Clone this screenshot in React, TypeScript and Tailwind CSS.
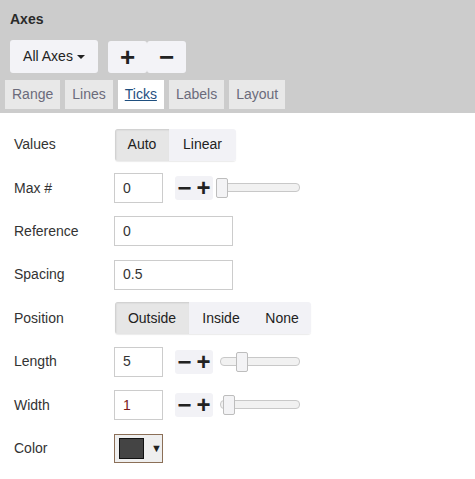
import React, { useState } from "react";

const tabs = ["Range", "Lines", "Ticks", "Labels", "Layout"];

const Stepper: React.FC = () => (
  <div className="flex h-[24px] ml-[12px]">
    <button className="w-[19px] h-full bg-[#f2f2f6] rounded-l-[3px] flex items-center justify-center text-[#222] text-[24px] font-bold leading-none">
      −
    </button>
    <button className="w-[19px] h-full bg-[#f2f2f6] rounded-r-[3px] flex items-center justify-center text-[#222] text-[24px] font-bold leading-none">
      +
    </button>
  </div>
);

const Slider: React.FC<{ pos: number }> = ({ pos }) => (
  <div className="relative w-[84px] h-[20px] ml-[3px]">
    <div className="absolute left-[4px] right-0 top-[5px] h-[9px] rounded-[4px] border border-[#c8c8c8] bg-[#f1f1f1]" />
    <div
      className="absolute top-0 w-[12px] h-[20px] border border-[#bdbdbd] bg-[#f3f3f5] rounded-[2px]"
      style={{ left: pos }}
    />
  </div>
);

const Row: React.FC<{ label: string; children: React.ReactNode }> = ({ label, children }) => (
  <div className="flex items-center h-[43.4px]">
    <div className="w-[100px] text-[14px] text-[#333]">{label}</div>
    <div className="flex items-center">{children}</div>
  </div>
);

const Seg: React.FC<{ items: { label: string; w: number }[]; active: string }> = ({ items, active }) => (
  <div className="flex h-[32px] rounded-[3px] overflow-hidden shadow-[0_1px_1px_rgba(0,0,0,0.08)] ml-[1px]">
    {items.map((it) => (
      <div
        key={it.label}
        style={{ width: it.w }}
        className={`flex items-center justify-center text-[14px] text-[#222] ${
          it.label === active ? "bg-[#e6e6e6] shadow-[inset_1px_1px_2px_rgba(0,0,0,0.12)]" : "bg-[#f2f2f6]"
        }`}
      >
        {it.label}
      </div>
    ))}
  </div>
);

const Input: React.FC<{ value: string; wide?: boolean; red?: boolean }> = ({ value, wide, red }) => (
  <div
    className={`h-[30px] border border-[#cccccc] bg-white flex items-center pl-[8px] text-[14px] ${
      wide ? "w-[119px]" : "w-[49px]"
    } ${red ? "text-[#7a1a1a]" : "text-[#333]"}`}
  >
    {value}
  </div>
);

const App: React.FC = () => {
  const [tab, setTab] = useState("Ticks");

  return (
    <div className="w-[475px] h-[479px] bg-white font-['Liberation_Sans',Arial,sans-serif]">
      <div className="bg-[#cccccc] h-[113px] px-[10px] pt-[10px]">
        <div className="text-[14px] font-bold text-[#2a2a2a] leading-[18px]">Axes</div>
        <div className="flex gap-[10px] mt-[12px]">
          <button className="w-[88px] h-[33px] bg-[#f3f3f7] rounded-[3px] text-[14px] text-[#222] flex items-center justify-center gap-[4px]">
            All Axes
            <span className="inline-block w-0 h-0 border-l-[4px] border-r-[4px] border-t-[4px] border-l-transparent border-r-transparent border-t-[#222]" />
          </button>
          <div className="flex h-[32px] mt-[1px]">
            <button className="w-[39px] h-full bg-[#f3f3f7] rounded-[3px] text-[26px] font-bold text-[#222] leading-none flex items-center justify-center">
              +
            </button>
            <button className="w-[39px] h-full bg-[#f3f3f7] rounded-[3px] text-[26px] font-bold text-[#222] leading-none flex items-center justify-center">
              −
            </button>
          </div>
        </div>
        <div className="flex gap-[5px] mt-[7px] -ml-[5px]">
          {tabs.map((t) => (
            <button
              key={t}
              onClick={() => setTab(t)}
              className={`h-[29px] px-[7px] text-[14px] ${
                tab === t ? "bg-white text-[#1f4f7f] underline" : "bg-[#e8e8e8] text-[#6b6b7b]"
              }`}
            >
              {t}
            </button>
          ))}
        </div>
      </div>

      <div className="pl-[14px] pt-[10px]">
        <Row label="Values">
          <Seg
            active="Auto"
            items={[
              { label: "Auto", w: 54 },
              { label: "Linear", w: 67 },
            ]}
          />
        </Row>
        <Row label="Max #">
          <Input value="0" />
          <Stepper />
          <Slider pos={0} />
        </Row>
        <Row label="Reference">
          <Input value="0" wide />
        </Row>
        <Row label="Spacing">
          <Input value="0.5" wide />
        </Row>
        <Row label="Position">
          <Seg
            active="Outside"
            items={[
              { label: "Outside", w: 74 },
              { label: "Inside", w: 64 },
              { label: "None", w: 58 },
            ]}
          />
        </Row>
        <Row label="Length">
          <Input value="5" />
          <Stepper />
          <Slider pos={20} />
        </Row>
        <Row label="Width">
          <Input value="1" red />
          <Stepper />
          <Slider pos={7} />
        </Row>
        <Row label="Color">
          <div className="w-[49px] h-[29px] border border-[#8b6f57] bg-[#efefef] flex items-center pl-[4px] gap-[7px]">
            <div className="w-[26px] h-[21px] bg-[#444444] border border-[#111]" />
            <span className="text-[11px] text-[#222]">▼</span>
          </div>
        </Row>
      </div>
    </div>
  );
};

export default App;
